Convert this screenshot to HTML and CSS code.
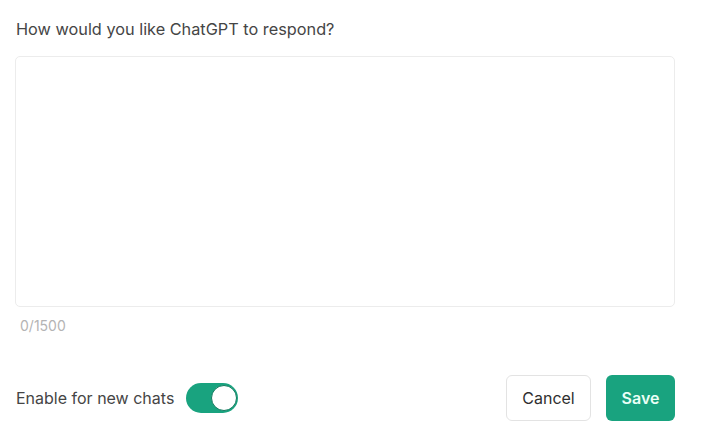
FILE: index.html
```html
<!DOCTYPE html>
<html lang="en">
<head>
<meta charset="utf-8">
<title>Custom instructions</title>
<link rel="stylesheet" href="styles.css">
</head>
<body>
<div class="panel">
  <label class="question" for="resp">How would you like ChatGPT to respond?</label>
  <textarea id="resp" class="answer"></textarea>
  <div class="counter">0/1500</div>
  <div class="footer">
    <div class="enable">
      <span class="enable-label">Enable for new chats</span>
      <span class="toggle"><span class="knob"></span></span>
    </div>
    <div class="actions">
      <button class="btn btn-cancel">Cancel</button>
      <button class="btn btn-save">Save</button>
    </div>
  </div>
</div>
</body>
</html>
```

FILE: styles.css
```css
* { box-sizing: border-box; }
html, body {
  margin: 0;
  background: #ffffff;
  font-family: "Inter", "Liberation Sans", sans-serif;
}
.panel {
  width: 701px;
  padding: 17px 26px 0 15px;
  display: flex;
  flex-direction: column;
}
.question {
  display: block;
  padding-left: 1px;
  font-size: 16.3px;
  line-height: 24px;
  color: #454545;
  margin-bottom: 15px;
}
.answer {
  display: block;
  width: 660px;
  height: 251px;
  border: 1px solid #ececec;
  border-radius: 5px;
  resize: none;
  outline: none;
  padding: 8px 12px;
  font-family: inherit;
  font-size: 15px;
}
.counter {
  margin-top: 9px;
  padding-left: 5px;
  font-size: 14px;
  line-height: 20px;
  color: #b4b4b4;
}
.footer {
  margin-top: 39px;
  display: flex;
  align-items: center;
  justify-content: space-between;
}
.enable {
  display: flex;
  align-items: center;
  gap: 12px;
  padding-left: 1px;
}
.enable-label {
  font-size: 16px;
  color: #454545;
}
.toggle {
  position: relative;
  display: block;
  width: 52px;
  height: 30px;
  border-radius: 15px;
  background: #19a37f;
}
.knob {
  position: absolute;
  right: 1px;
  top: 2px;
  width: 26px;
  height: 26px;
  border-radius: 50%;
  background: #ffffff;
  border: 1px solid #127a5e;
}
.actions {
  display: flex;
  gap: 15px;
}
.btn {
  height: 46px;
  border-radius: 6px;
  font-family: inherit;
  font-size: 16px;
  cursor: pointer;
}
.btn-cancel {
  width: 85px;
  background: #ffffff;
  border: 1px solid #e3e3e3;
  color: #2f2f2f;
}
.btn-save {
  width: 69px;
  background: #19a37f;
  border: none;
  color: #eafff6;
  font-weight: 600;
}
```
